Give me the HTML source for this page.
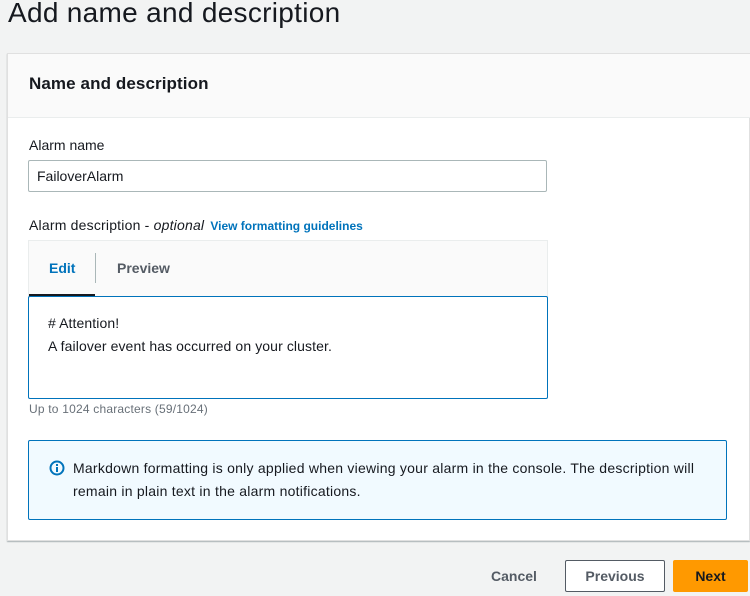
<!DOCTYPE html>
<html><head><style>
*{box-sizing:border-box;margin:0;padding:0}
body{width:750px;height:596px;background:#f2f3f3;font-family:"Liberation Sans",sans-serif;color:#16191f;position:relative;overflow:hidden}
.a{position:absolute;white-space:nowrap}
</style></head><body>
<div class="a" style="left:8px;top:-3px;font-size:28px;letter-spacing:0.3px">Add name and description</div>
<div class="a" style="left:7px;top:53px;width:743px;height:488px;background:#fff;border:1px solid #e0e0e0;box-shadow:0 1px 1px rgba(0,28,36,.3)"></div>
<div class="a" style="left:8px;top:54px;width:742px;height:64px;background:#fafafa;border-bottom:1px solid #eaeded"></div>
<div class="a" style="left:29px;top:74px;font-size:17px;font-weight:bold;letter-spacing:0.1px">Name and description</div>
<div class="a" style="left:29px;top:137px;font-size:14px">Alarm name</div>
<div class="a" style="left:28px;top:160px;width:519px;height:32px;border:1px solid #aab7b8;border-radius:2px;padding:7px 8px;font-size:14px">FailoverAlarm</div>
<div class="a" style="left:29px;top:217px;font-size:14px;letter-spacing:0.2px">Alarm description - <i>optional</i> <span style="color:#0073bb;font-weight:bold;font-size:12px;margin-left:2px;letter-spacing:0px">View formatting guidelines</span></div>
<div class="a" style="left:28px;top:240px;width:520px;height:57px;background:#fafafa;border:1px solid #eaeded"></div>
<div class="a" style="left:49px;top:260px;font-size:14px;font-weight:bold;color:#0073bb">Edit</div>
<div class="a" style="left:95px;top:253px;width:1px;height:30px;background:#aab7b8"></div>
<div class="a" style="left:117px;top:260px;font-size:14px;font-weight:bold;color:#545b64">Preview</div>
<div class="a" style="left:29px;top:294px;width:66px;height:3px;background:#16191f"></div>
<div class="a" style="left:28px;top:296px;width:520px;height:103px;border:1px solid #0073bb;border-radius:2px;padding:15px 19px;font-size:14px;line-height:23px;letter-spacing:0.1px;background:#fff">
# Attention!<br>A failover event has occurred on your cluster.</div>
<div class="a" style="left:29px;top:402px;font-size:12px;color:#687078;letter-spacing:0.2px">Up to 1024 characters (59/1024)</div>
<div class="a" style="left:28px;top:440px;width:699px;height:80px;background:#f1faff;border:1px solid #0073bb;border-radius:2px"></div>
<svg class="a" style="left:49px;top:460px" width="16" height="16" viewBox="0 0 16 16"><circle cx="8" cy="8" r="6.5" fill="none" stroke="#0073bb" stroke-width="2"/><rect x="7" y="7" width="2" height="5" fill="#0073bb"/><rect x="7" y="4" width="2" height="2" fill="#0073bb"/></svg>
<div class="a" style="left:73px;top:457px;font-size:14px;line-height:23px;letter-spacing:0.24px">Markdown formatting is only applied when viewing your alarm in the console. The description will<br>remain in plain text in the alarm notifications.</div>
<div class="a" style="left:491px;top:568px;font-size:14px;font-weight:bold;color:#545b64">Cancel</div>
<div class="a" style="left:565px;top:560px;width:100px;height:32px;border:1px solid #545b64;border-radius:2px;background:#fff;font-size:14px;font-weight:bold;color:#545b64;text-align:center;line-height:30px">Previous</div>
<div class="a" style="left:673px;top:560px;width:75px;height:32px;border-radius:2px;background:#ff9900;font-size:14px;font-weight:bold;color:#16191f;text-align:center;line-height:32px">Next</div>
</body></html>
